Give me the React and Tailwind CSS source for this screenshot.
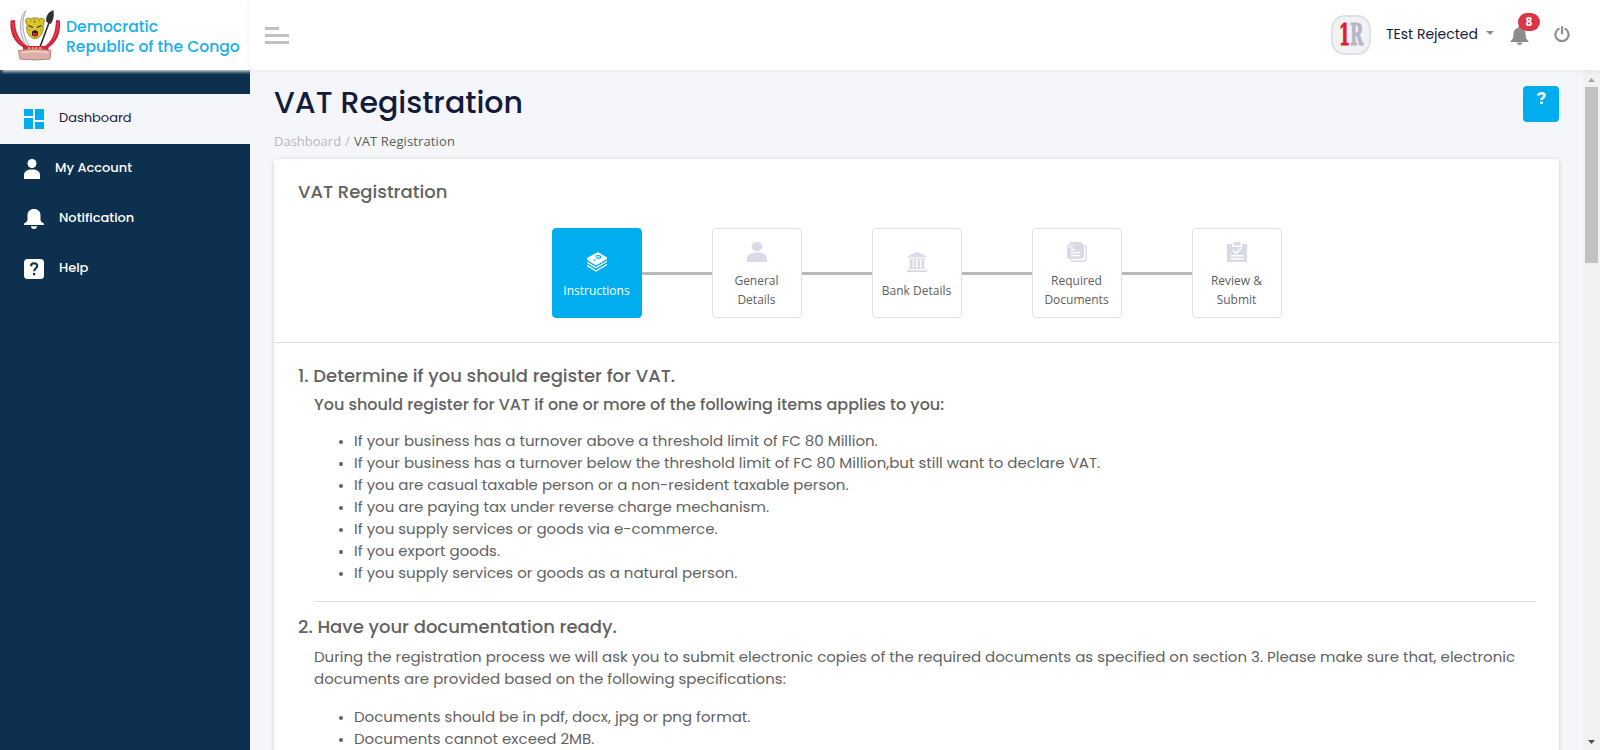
import React from "react";

const poppins = "font-['Poppins','Inter',sans-serif] [font-feature-settings:'cv11']";
const segoe = "font-['Segoe_UI','Open_Sans',sans-serif]";

function Emblem() {
  return (
    <svg width="52" height="52" viewBox="9 9 52 52" className="shrink-0">
      <path d="M26 10.500C19 17 18 32 26 46L29 45.500C21.500 33 21.500 19 26 10.500Z" fill="#e9e9ec" stroke="#9a9aa2" strokeWidth="0.800" />
      <path d="M40 47L50 20" stroke="#2c2c2c" strokeWidth="1.600" />
      <path d="M53.500 10C48 12 45 17 46.500 22L50.500 24C54 20 54 15 53.500 10Z" fill="#2f3133" />
      <path d="M10.500 20.500L15 20C15 32 19 40 27 46H45C53 40 55.500 32 56 20L60 20.500C61 33 57 42 48.500 47.500V50.500H23V47.500C14 42 9.500 33 10.500 20.500Z" fill="#d5203f" />
      <path d="M13 23C13.500 33 17 40 23 45M58 23C57.500 33 54 40 48 45" fill="none" stroke="#e8863b" strokeWidth="1" strokeDasharray="1.500 1.300" />
      <path d="M28 48.300H43" stroke="#f6c94a" strokeWidth="2" strokeDasharray="2.200 1.500" />
      <path d="M25.500 20C27 17.500 29 18 30.500 19C33 17.500 37 17.500 39.500 19C42 17.500 44.500 18.500 44.500 21L43 25C44 30 42 34 40 36C37 39.500 33 39.500 30 36C27.500 34 26 30 27 25Z" fill="#dcc52c" stroke="#6c6015" strokeWidth="0.700" />
      <path d="M28.500 25.500L33 27.500M41.500 25.500L37 27.500" stroke="#33300f" strokeWidth="1.200" />
      <path d="M30 21h.8M34.500 20v3M38.500 21h1M29 30h1M40 30h1" stroke="#7d7020" strokeWidth="1" />
      <path d="M32 31.500L35 30L38 31.500V35C37 37 33 37 32 35Z" fill="#3b1c10" />
      <path d="M33 33H37V36H33Z" fill="#d8203c" />
      <path d="M18.500 50.500Q35 47.500 51 50.500L50 59Q35 61 20 59Z" fill="#dfb0a7" stroke="#a97c74" strokeWidth="0.900" />
      <path d="M22 52.500Q35 50.500 48 52.500" stroke="#efd0c9" strokeWidth="1.400" fill="none" />
    </svg>
  );
}

const DashboardIcon = () => (
  <svg width="20" height="20" viewBox="0 0 20 20" fill="#00aeef">
    <path d="M0 0h9v7H0zM11 0h9v11h-9zM0 9h9v11H0zM11 13h9v7h-9z" />
  </svg>
);

const AccountIcon = () => (
  <svg width="16" height="20" viewBox="0 0 16 20" fill="#fff">
    <circle cx="8" cy="4.500" r="4.500" />
    <path d="M0 20v-4c0-3.500 3-5.500 8-5.500s8 2 8 5.500v4z" />
  </svg>
);

const BellIcon = () => (
  <svg width="20" height="20" viewBox="0 0 20 20" fill="#fff">
    <path d="M10 0C6.200 0 3.500 2.500 3.500 6v4.500c0 1.800-1.200 3.200-3.500 4V16h20v-1.500c-2.300-.8-3.500-2.200-3.500-4V6C16.500 2.500 13.800 0 10 0zM7 17.200h6C13 19 11.800 20 10 20s-3-1-3-2.800z" />
  </svg>
);

const HelpIcon = () => (
  <svg width="20" height="20" viewBox="0 0 20 20">
    <rect width="20" height="20" rx="3.500" fill="#fff" />
    <path d="M7 7.300C7 5.300 8.200 4.200 10.100 4.200S13.200 5.300 13.200 7C13.200 9.200 10.200 9.300 10.200 12.300" fill="none" stroke="#0c304e" strokeWidth="2" />
    <rect x="9" y="14" width="2.200" height="2.200" fill="#0c304e" />
  </svg>
);

const navItems = [
  { label: "Dashboard", icon: DashboardIcon, text: "text-[#1b1b3a]", row: "bg-[#f5f6fa]" },
  { label: "My Account", icon: AccountIcon, text: "font-medium text-white", row: "" },
  { label: "Notification", icon: BellIcon, text: "font-medium text-white", row: "" },
  { label: "Help", icon: HelpIcon, text: "font-medium text-white", row: "" },
];

function Sidebar() {
  return (
    <aside className="flex w-[250px] shrink-0 flex-col bg-[#0c304e]">
      <div className={`z-10 flex h-[70px] shrink-0 gap-[5px] bg-white pt-[9px] pl-[9px] shadow-[2px_2px_3px_rgba(255,255,255,0.75)] [clip-path:inset(0_0_-8px_0)] ${poppins}`}>
        <Emblem />
        <div className="pt-2 text-[15.6px] leading-5 font-medium whitespace-nowrap text-[#17b0ec]">
          <div>Democratic</div>
          <div>Republic of the Congo</div>
        </div>
      </div>
      <nav className={`pt-6 text-[13px] ${poppins}`}>
        {navItems.map(({ label, icon: Icon, text, row }) => (
          <div key={label} className={`flex h-[50px] items-center pl-6 ${row}`}>
            <Icon />
            <span className={`ml-[15px] pb-[3px] ${text}`}>{label}</span>
          </div>
        ))}
      </nav>
    </aside>
  );
}

function TopBar() {
  return (
    <header className={`z-10 flex h-[70px] shrink-0 items-center bg-white pl-[15px] shadow-[0_0_6px_rgba(40,40,80,0.08)] ${poppins}`}>
      <div className="flex w-6 flex-col gap-1">
        <span className="h-[3px] w-3.5 bg-[#c0c0ca]" />
        <span className="h-[3px] w-6 bg-[#c0c0ca]" />
        <span className="h-[3px] w-6 bg-[#c0c0ca]" />
      </div>
      <div className="ml-auto flex items-center">
        <div className="flex h-10 w-10 items-center justify-center rounded-[14px] border-2 border-[#dfe1e9] bg-[#f2f2f4]">
          <div className="flex scale-x-[0.55] font-['DejaVu_Serif',serif] text-[29px] leading-none font-bold">
            <span className="text-[#dc1f2b] [-webkit-text-stroke:1px_#dc1f2b]">1</span>
            <span className="text-[#b3b8c9] [-webkit-text-stroke:1px_#b3b8c9]">R</span>
          </div>
        </div>
        <span className="ml-[15px] pb-0.5 text-sm text-[#141a3a]">TEst Rejected</span>
        <svg width="8" height="4" viewBox="0 0 8 4" className="mb-1 ml-2" fill="#8c8c8c">
          <path d="M0 0h8L4 4z" />
        </svg>
        <div className="relative ml-4">
          <svg width="19" height="19" viewBox="0 0 19 19" fill="#8c8c8c">
            <path d="M8 2V1.200C8 .5 8.700 0 9.500 0S11 .5 11 1.200V2C14 2.600 15.500 5 15.500 8c0 4 1.200 5.700 3.500 8H0c2.300-2.300 3.500-4 3.500-8C3.500 5 5 2.600 8 2zM7 16.500h5.200c0 1.500-1.100 2.500-2.600 2.500S7 18 7 16.500z" />
          </svg>
          <span className="absolute -top-[13px] left-2 flex h-[18px] w-[22px] items-center justify-center rounded-full bg-[#dc3545] font-['Open_Sans',sans-serif] text-xs font-bold text-white">8</span>
        </div>
        <svg width="16" height="16" viewBox="0 0 16 16" className="mr-[30px] mb-0.5 ml-[25px]" fill="none" stroke="#8f8f93" strokeWidth="2.200" strokeLinecap="round">
          <path d="M4.600 2.900A6.600 6.600 0 1 0 11.400 2.900M8 1.200V7.500" />
        </svg>
      </div>
    </header>
  );
}

const InstructionsIcon = () => (
  <svg width="20" height="20" viewBox="0 0 20 20">
    <path d="M0 6L11 0l9 5.500v1.500L9 13.500 0 8z" fill="#fff" />
    <path d="M0 10.200l9 5.500 11-6.500M0 13.400l9 5.600 11-6.500" fill="none" stroke="#fff" strokeWidth="1.300" />
    <path d="M8.500 4.300c2-1.200 5.300-.8 5.300.6 0 1.400-2.600 1.500-4.600.9M6.800 7.600l1.600.9" fill="none" stroke="#00aeef" strokeWidth="1.400" />
  </svg>
);

const PersonIcon = () => (
  <svg width="20" height="20" viewBox="0 0 20 20" fill="#d8dae5">
    <ellipse cx="10" cy="4.600" rx="5.500" ry="4.600" />
    <path d="M0 20v-3.500c0-3.800 4-6 10-6s10 2.200 10 6V20z" />
  </svg>
);

const BankIcon = () => (
  <svg width="20" height="20" viewBox="0 0 20 20" fill="#d8dae5">
    <path d="M10 0l9 4v1.300H1V4zM2 6.300h16v1.200H2zM3 8h2.800v8H3zM7 8h2.200v8H7zM10.800 8H13v8h-2.200zM14.500 8h2.800v8h-2.800zM2 16h16v1H2zM0 18.200h20V20H0z" />
  </svg>
);

const DocumentsIcon = () => (
  <svg width="20" height="20" viewBox="0 0 20 20">
    <path d="M4 0h10l3 3v11a3 3 0 0 1-3 3H3a3 3 0 0 1-3-3V4z" fill="#d8dae5" />
    <path d="M17.500 3.500q1.800.5 1.800 2.500v10a3.300 3.300 0 0 1-3.300 3.300H7q-2.500 0-3.500-1.700" fill="none" stroke="#d8dae5" strokeWidth="1.400" />
    <path d="M4 7.500h4M4 10.500h9M4 13.500h9" stroke="#fff" strokeWidth="1.300" />
    <path d="M1 5.200h4V1" fill="none" stroke="#fff" strokeWidth="0.700" />
  </svg>
);

const ReviewIcon = () => (
  <svg width="20" height="20" viewBox="0 0 20 20">
    <path d="M0 2h5v3h10V2h5v18H0z" fill="#d8dae5" />
    <path d="M6.500 0h7v3.500h-7z" fill="#d8dae5" />
    <path d="M6 8.500l3 2.700L14.500 6M3.500 13.800h13M3.500 16.800h13" fill="none" stroke="#fff" strokeWidth="1.500" />
  </svg>
);

const steps = [
  { lines: ["Instructions"], icon: InstructionsIcon, box: "border-[#00aeef] bg-[#00aeef] pt-[23px] text-white" },
  { lines: ["General", "Details"], icon: PersonIcon, box: "border-[#dfe0e8] bg-white pt-[13px] text-[#606060]" },
  { lines: ["Bank Details"], icon: BankIcon, box: "border-[#dfe0e8] bg-white pt-[23px] text-[#606060]" },
  { lines: ["Required", "Documents"], icon: DocumentsIcon, box: "border-[#dfe0e8] bg-white pt-[13px] text-[#606060]" },
  { lines: ["Review &", "Submit"], icon: ReviewIcon, box: "border-[#dfe0e8] bg-white pt-[13px] text-[#606060]" },
];

function Stepper() {
  return (
    <div className={`flex items-center justify-center ${segoe}`}>
      {steps.map(({ lines, icon: Icon, box }, i) => (
        <React.Fragment key={lines[0]}>
          {i > 0 && <div className="h-[3px] w-[70px] bg-[#b9b9b9]" />}
          <div className={`flex h-[90px] w-[90px] flex-col items-center rounded border ${box}`}>
            <Icon />
            <div className="mt-[9px] text-center text-xs leading-[19px] whitespace-nowrap">
              {lines.map((line) => (
                <div key={line}>{line}</div>
              ))}
            </div>
          </div>
        </React.Fragment>
      ))}
    </div>
  );
}

const criteria = [
  "If your business has a turnover above a threshold limit of FC 80 Million.",
  "If your business has a turnover below the threshold limit of FC 80 Million,but still want to declare VAT.",
  "If you are casual taxable person or a non-resident taxable person.",
  "If you are paying tax under reverse charge mechanism.",
  "If you supply services or goods via e-commerce.",
  "If you export goods.",
  "If you supply services or goods as a natural person.",
];

const formats = [
  "Documents should be in pdf, docx, jpg or png format.",
  "Documents cannot exceed 2MB.",
];

function BulletList({ items }) {
  return (
    <ul className="pl-[25px]">
      {items.map((text) => (
        <li key={text} className="flex items-center">
          <span className="mt-0.5 mr-[11px] h-1 w-1 rounded-full bg-[#606060]" />
          <span>{text}</span>
        </li>
      ))}
    </ul>
  );
}

function Card() {
  return (
    <section className={`mt-2 h-[700px] rounded bg-white text-[#626262] shadow-[0_1px_4px_rgba(60,60,90,0.22)] ${poppins}`}>
      <div className="h-[184px] border-b border-[#dfe0e8] px-6 pt-[21px]">
        <h2 className="text-lg leading-6 font-medium">VAT Registration</h2>
        <div className="mt-6">
          <Stepper />
        </div>
      </div>
      <div className="px-6 pt-[21px] text-[15px] leading-[22px]">
        <h3 className="text-lg leading-6 font-medium">1. Determine if you should register for VAT.</h3>
        <div className="pl-4">
          <p className="pt-[5px] text-base leading-6 font-medium">
            You should register for VAT if one or more of the following items applies to you:
          </p>
          <div className="mt-[13px]">
            <BulletList items={criteria} />
          </div>
          <hr className="mt-[17px] border-[#dfdfdf]" />
        </div>
        <h3 className="mt-[13px] text-lg leading-6 font-medium">2. Have your documentation ready.</h3>
        <div className="pl-4">
          <p className="mt-[7px]">
            During the registration process we will ask you to submit electronic copies of the required documents as specified on section 3. Please make sure that, electronic
            documents are provided based on the following specifications:
          </p>
          <div className="mt-4">
            <BulletList items={formats} />
          </div>
        </div>
      </div>
    </section>
  );
}

function ScrollBar() {
  return (
    <div className="flex w-[17px] shrink-0 flex-col items-center bg-[#f1f1f1]">
      <div className="flex h-[17px] shrink-0 items-center">
        <svg width="7" height="4" viewBox="0 0 7 4" className="mt-0.5" fill="#a3a3a3"><path d="M3.500 0L7 4H0z" /></svg>
      </div>
      <div className="h-[176px] w-[13px] bg-[#c1c1c1]" />
      <div className="mt-auto flex h-[17px] items-center">
        <svg width="7" height="4" viewBox="0 0 7 4" fill="#505050"><path d="M0 0h7L3.500 4z" /></svg>
      </div>
    </div>
  );
}

export default function App() {
  return (
    <div className="flex h-[750px] w-[1600px] overflow-hidden bg-[#f5f6fa]">
      <Sidebar />
      <div className="flex min-w-0 flex-1 flex-col">
        <TopBar />
        <div className="flex min-h-0 flex-1">
          <main className="min-w-0 flex-1 overflow-hidden pr-6 pl-6">
            <div className="flex justify-between">
              <div>
                <h1 className={`pt-[15px] text-[30px] leading-9 font-medium text-[#141a3a] ${poppins}`}>VAT Registration</h1>
                <div className={`mt-2.5 flex gap-1 text-[13px] leading-5 text-[#b8b8b8] ${segoe}`}>
                  <span>Dashboard</span>
                  <span>/</span>
                  <span className="tracking-[0.12px] text-[#5c5c5c]">VAT Registration</span>
                </div>
              </div>
              <button className="mt-4 flex h-9 w-9 justify-center rounded bg-[#00aeef] pt-1.5 text-white">
                <svg width="9" height="12" viewBox="0 0 9 12" fill="none" stroke="#fff" strokeWidth="2.500">
                  <path d="M1 3.500C1.500 2 2.800 1.300 4.500 1.300c1.800 0 3.200.8 3.200 2.300 0 2-3.200 1.900-3.200 4.400M4.500 9.400V12" />
                </svg>
              </button>
            </div>
            <Card />
          </main>
          <ScrollBar />
        </div>
      </div>
    </div>
  );
}
